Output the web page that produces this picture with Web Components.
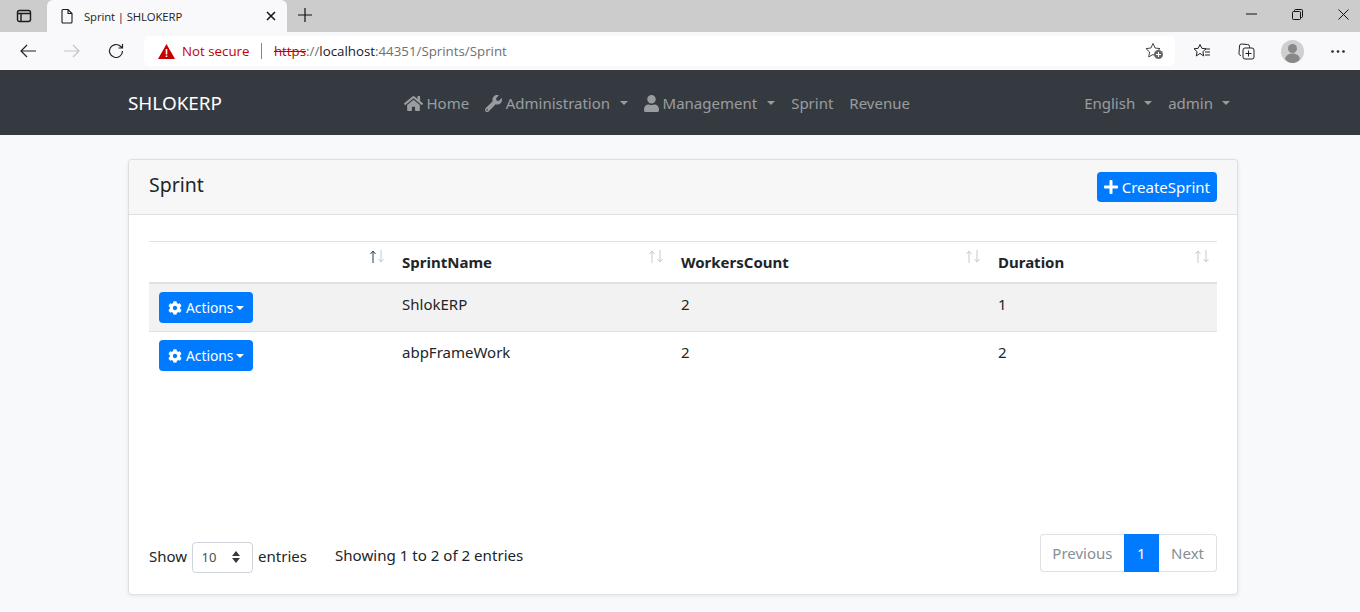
<!DOCTYPE html>
<html>
<head>
<meta charset="utf-8">
<title>Sprint | SHLOKERP</title>
<style>
  html, body { margin: 0; height: 100%; overflow: hidden; }
  body { background: #f8f9fa; font-family: "Noto Sans", "Open Sans", sans-serif; color: #212529; font-size: 15px; }
</style>
</head>
<body>
<browser-chrome></browser-chrome>
<app-navbar></app-navbar>
<main-page>
  <sprint-card>
    <sprint-table></sprint-table>
    <table-footer slot="footer"></table-footer>
  </sprint-card>
</main-page>

<script>
const ICONS = {
  home: `<svg viewBox="0 0 576 512" width="19" height="17"><path fill="currentColor" d="M280.4 148.3L96 300.1V464a16 16 0 0 0 16 16l112.1-.3a16 16 0 0 0 15.9-16V368a16 16 0 0 1 16-16h64a16 16 0 0 1 16 16v95.6a16 16 0 0 0 16 16.1L464 480a16 16 0 0 0 16-16V300L295.700 148.300a12.200 12.200 0 0 0-15.300 0zM571.600 251.500L488 182.600V44.100a12 12 0 0 0-12-12h-56a12 12 0 0 0-12 12v72.600L318.500 43a48 48 0 0 0-61 0L4.300 251.500a12 12 0 0 0-1.600 16.900l25.500 31A12 12 0 0 0 45.200 301l235.200-193.700a12.200 12.200 0 0 1 15.300 0L530.900 301a12 12 0 0 0 16.900-1.600l25.500-31a12 12 0 0 0-1.700-16.900z"/></svg>`,
  wrench: `<svg viewBox="0 0 512 512" width="17" height="17"><path fill="currentColor" d="M507.700 109.100c-2.200-9-13.500-12.100-20.100-5.500l-74.400 74.400-67.900-11.300-11.300-67.900 74.400-74.400c6.600-6.600 3.400-17.900-5.700-20.200-47.400-11.700-99.600.9-136.600 37.900-39.600 39.600-50.500 97.100-34.100 147.200L18.700 402.800c-25 25-25 65.500 0 90.500 25 25 65.500 25 90.500 0l213.200-213.200c50.100 16.700 107.500 5.700 147.400-34.200 37.100-37.100 49.700-89.300 37.900-136.800zM64 472c-13.200 0-24-10.800-24-24 0-13.300 10.700-24 24-24s24 10.700 24 24c0 13.200-10.700 24-24 24z"/></svg>`,
  user: `<svg viewBox="0 0 448 512" width="15" height="17"><path fill="currentColor" d="M224 256c70.700 0 128-57.300 128-128S294.700 0 224 0 96 57.300 96 128s57.300 128 128 128zm89.600 32h-16.700c-22.200 10.200-46.900 16-72.900 16s-50.600-5.800-72.900-16h-16.700C60.200 288 0 348.200 0 422.400V464c0 26.500 21.500 48 48 48h352c26.500 0 48-21.500 48-48v-41.600c0-74.200-60.200-134.400-134.400-134.400z"/></svg>`,
  cog: `<svg viewBox="0 0 512 512" width="14" height="14"><path fill="currentColor" d="M487.400 315.700l-42.600-24.600c4.300-23.200 4.300-47 0-70.200l42.600-24.600c4.900-2.800 7.100-8.600 5.500-14-11.100-35.600-30-67.800-54.700-94.600-3.800-4.100-10-5.100-14.800-2.300L380.800 110c-17.900-15.400-38.500-27.300-60.800-35.100V25.800c0-5.600-3.900-10.500-9.400-11.700-36.700-8.200-74.300-7.800-109.200 0-5.500 1.200-9.400 6.100-9.400 11.700V75c-22.200 7.900-42.800 19.800-60.800 35.100L88.700 85.500c-4.900-2.800-11-1.900-14.800 2.300-24.700 26.700-43.600 58.900-54.700 94.600-1.700 5.400.6 11.200 5.500 14L67.300 221c-4.300 23.200-4.300 47 0 70.200l-42.600 24.600c-4.900 2.800-7.100 8.600-5.500 14 11.100 35.600 30 67.800 54.700 94.600 3.800 4.100 10 5.100 14.800 2.300l42.600-24.600c17.900 15.400 38.500 27.300 60.800 35.100v49.200c0 5.600 3.900 10.500 9.400 11.700 36.700 8.200 74.300 7.800 109.200 0 5.500-1.200 9.400-6.100 9.400-11.700v-49.200c22.200-7.900 42.800-19.800 60.800-35.100l42.600 24.600c4.900 2.800 11 1.900 14.800-2.300 24.700-26.700 43.600-58.900 54.700-94.600 1.500-5.500-.7-11.300-5.600-14.100zM256 336c-44.100 0-80-35.900-80-80s35.900-80 80-80 80 35.900 80 80-35.900 80-80 80z"/></svg>`,
  plus: `<svg viewBox="0 0 448 512" width="14" height="16"><path fill="currentColor" d="M416 208H272V64c0-17.670-14.330-32-32-32h-32c-17.670 0-32 14.330-32 32v144H32c-17.670 0-32 14.330-32 32v32c0 17.670 14.330 32 32 32h144v144c0 17.670 14.330 32 32 32h32c17.670 0 32-14.330 32-32V304h144c17.670 0 32-14.330 32-32v-32c0-17.670-14.330-32-32-32z"/></svg>`
};

function define(name, html) {
  customElements.define(name, class extends HTMLElement {
    constructor() {
      super();
      this.attachShadow({mode: 'open'}).innerHTML = html;
    }
  });
}

define('browser-chrome', `
  <style>
    :host { display: block; font-family: "Open Sans", "Noto Sans", sans-serif; }
    svg { display: block; }
    .strip { height: 32px; background: #cccccc; display: flex; align-items: flex-end; }
    .panes { width: 47px; height: 32px; display: flex; align-items: center; justify-content: center; }
    .tab { width: 240px; height: 32px; background: #f9f9fb; border-radius: 6px 6px 0 0; display: flex; align-items: center; box-sizing: border-box; padding: 0 11px 0 13px; font-size: 11.300px; color: #222; }
    .tab .title { flex: 1; margin-left: 10px; letter-spacing: -.1px; }
    .newtab { width: 36px; height: 30px; padding-bottom: 2px; display: flex; align-items: center; justify-content: center; }
    .spacer { flex: 1; }
    .win { width: 46px; height: 28px; padding-bottom: 4px; display: flex; align-items: center; justify-content: center; }
    .win:last-child { width: 34px; padding-left: 6px; }
    .bar { height: 38px; background: #f9f9fb; display: flex; align-items: center; border-bottom: 1px solid #3a3a3a; }
    .nav { width: 44px; display: flex; justify-content: center; }
    .nav.first { margin-left: 6px; }
    .url { width: 1031px; height: 30px; margin-left: 6px; background: #fff; border-radius: 5px; display: flex; align-items: center; box-sizing: border-box; padding-left: 14px; font-size: 13.300px; white-space: nowrap; }
    .warn { color: #c40000; margin-left: 7px; }
    .sep { width: 1px; height: 16px; background: #888; margin: 0 11.500px 0 12px; }
    .https { color: #c40000; text-decoration: line-through; }
    .dim { color: #6f6f6f; }
    .host { color: #1a1a1a; }
    .fav { margin-left: auto; margin-right: 11px; }
    .tools { display: flex; align-items: center; flex: 1; margin-left: 5px; }
    .tools > div { width: 44px; display: flex; justify-content: center; align-items: center; }
    .tools > div.avatar { width: 48px; }
  </style>
  <div class="strip">
    <div class="panes">
      <svg width="16" height="16" viewBox="0 0 16 16" fill="none" stroke="#1a1a1a" stroke-width="1.400"><rect x="1.500" y="2.500" width="13" height="11" rx="2"/><path d="M1.500 5.500h13M5 5.500v8" /></svg>
    </div>
    <div class="tab">
      <svg width="14" height="16" viewBox="0 0 14 16" fill="none" stroke="#1a1a1a" stroke-width="1.100"><path d="M2 2.500a1 1 0 0 1 1-1h5l4 4v8.500a1 1 0 0 1-1 1H3a1 1 0 0 1-1-1zM8 1.500v4h4"/></svg>
      <span class="title">Sprint | SHLOKERP</span>
      <svg width="10" height="10" viewBox="0 0 10 10" stroke="#111" stroke-width="1.500"><path d="M1 1l8 8M9 1l-8 8"/></svg>
    </div>
    <div class="newtab">
      <svg width="16" height="16" viewBox="0 0 16 16" stroke="#111" stroke-width="1.200"><path d="M8 1v14M1 8h14"/></svg>
    </div>
    <div class="spacer"></div>
    <div class="win"><svg width="11" height="2" viewBox="0 0 11 2" stroke="#111"><path d="M0 1h11"/></svg></div>
    <div class="win"><svg width="11" height="11" viewBox="0 0 11 11" fill="none" stroke="#111"><rect x=".500" y="2.500" width="8" height="8" rx="1"/><path d="M2.500 2.500v-1a1 1 0 0 1 1-1h6a1 1 0 0 1 1 1v6a1 1 0 0 1-1 1h-1"/></svg></div>
    <div class="win"><svg width="11" height="11" viewBox="0 0 11 11" stroke="#111"><path d="M.500.500l10 10M10.500.500l-10 10"/></svg></div>
  </div>
  <div class="bar">
    <div class="nav first"><svg width="16" height="14" viewBox="0 0 16 14" fill="none" stroke="#222" stroke-width="1.200"><path d="M16 7H1M7 1L1 7l6 6"/></svg></div>
    <div class="nav"><svg width="16" height="14" viewBox="0 0 16 14" fill="none" stroke="#c4c4c4" stroke-width="1.200"><path d="M0 7h15M9 1l6 6-6 6"/></svg></div>
    <div class="nav"><svg width="16" height="16" viewBox="0 0 16 16" fill="none" stroke="#222" stroke-width="1.200"><path d="M14.500 8a6.500 6.500 0 1 1-2-4.700L14.500 5M14.500 1v4h-4"/></svg></div>
    <div class="url">
      <svg width="17" height="15" viewBox="0 0 17 15"><path fill="#c40000" d="M8.500 0L17 15H0z"/><path fill="#fff" d="M7.700 5h1.600v5.500H7.700zM7.700 11.500h1.600v1.600H7.700z"/></svg>
      <span class="warn">Not secure</span>
      <span class="sep"></span>
      <span><span class="https">https</span><span class="dim">://</span><span class="host">localhost</span><span class="dim">:44351/Sprints/Sprint</span></span>
      <svg class="fav" width="19" height="18" viewBox="0 0 19 18"><path fill="none" stroke="#444" d="M8 1.500l2.100 4.500 4.900.6-3.600 3.400.9 4.900L8 12.500l-4.300 2.400.9-4.900L1 6.600l4.900-.6z"/><circle cx="13.500" cy="12.500" r="4.500" fill="#666"/><path stroke="#fff" d="M13.500 10v5M11 12.500h5"/></svg>
    </div>
    <div class="tools">
      <div><svg width="18" height="16" viewBox="0 0 18 16" fill="none" stroke="#222"><path d="M7 1.500l1.800 3.800 4.200.5-3.100 2.900.8 4.300L7 10.400l-3.700 2.600.8-4.300L1 5.800l4.200-.5zM12 6h5M12 9h5M12 12h5"/></svg></div>
      <div><svg width="17" height="17" viewBox="0 0 17 17" fill="none" stroke="#222"><rect x="5" y="5" width="11" height="11" rx="2"/><path d="M10.500 7.500v6M7.500 10.500h6M3 12.500a2 2 0 0 1-2-2.500L1.500 3a2 2 0 0 1 2-2l6 .5a2 2 0 0 1 2 2V5"/></svg></div>
      <div class="avatar"><svg width="23" height="23" viewBox="0 0 23 23"><circle cx="11.500" cy="11.500" r="11.500" fill="#cfcfcf"/><circle cx="11.500" cy="8.500" r="4.500" fill="#888"/><path fill="#888" d="M4 19c1-4 4-5.500 7.500-5.500S18 15 19 19c-2 2.500-4.500 4-7.500 4S6 21.500 4 19z"/></svg></div>
      <div><svg width="14" height="3" viewBox="0 0 14 3" fill="#222"><circle cx="1.500" cy="1.500" r="1.300"/><circle cx="7" cy="1.500" r="1.300"/><circle cx="12.500" cy="1.500" r="1.300"/></svg></div>
    </div>
  </div>
`);

define('nav-item', `
  <style>
    :host { display: flex; align-items: center; color: rgba(255,255,255,.5); padding: 0 8px; font-size: 15px; gap: 3.500px; white-space: nowrap; height: 40px; }
    ::slotted(svg) { display: block; }
    :host([caret])::after { content: ""; margin-left: var(--caret-gap, 6.500px); border-top: 4.800px solid; border-left: 4.800px solid transparent; border-right: 4.800px solid transparent; }
  </style>
  <slot></slot>
`);

define('app-navbar', `
  <style>
    :host { display: flex; align-items: center; height: 64px; background: #343a40; box-sizing: border-box; padding: 0 122px 0 128px; }
    .brand { color: #fff; font-size: 18.900px; width: 268px; }
    .center { display: flex; align-items: center; flex: 1; }
    .right { display: flex; align-items: center; --caret-gap: 5.500px; }
  </style>
  <div class="brand">SHLOKERP</div>
  <div class="center">
    <nav-item>${ICONS.home}Home</nav-item>
    <nav-item caret>${ICONS.wrench}Administration</nav-item>
    <nav-item caret>${ICONS.user}Management</nav-item>
    <nav-item>Sprint</nav-item>
    <nav-item>Revenue</nav-item>
  </div>
  <div class="right">
    <nav-item caret>English</nav-item>
    <nav-item caret>admin</nav-item>
  </div>
`);

define('main-page', `
  <style>:host { display: block; padding: 24px 122px 0 128px; }</style>
  <slot></slot>
`);

define('blue-button', `
  <style>
    :host { display: inline-flex; align-items: center; gap: 4px; background: #007bff; color: #fff; border-radius: 4px; white-space: nowrap; box-sizing: border-box; font-size: 13.800px; padding: 0 8px 0 9px; height: 31px; }
    ::slotted(svg) { display: block; }
  </style>
  <slot></slot>
`);

define('sprint-card', `
  <style>
    :host { display: block; height: 436px; box-sizing: border-box; background: #fff; border: 1px solid #dfdfdf; border-radius: 4px; box-shadow: 0 1px 4px rgba(0,0,0,.08); }
    .head { height: 55px; box-sizing: border-box; background: #f7f7f7; border-bottom: 1px solid #dfdfdf; border-radius: 4px 4px 0 0; display: flex; align-items: center; justify-content: space-between; padding: 0 20px; }
    h2 { margin: 0; font-weight: 400; font-size: 19.500px; color: #212529; position: relative; top: -3px; }
    .body { padding: 26px 20px 0; display: flex; flex-direction: column; height: 380px; box-sizing: border-box; }
    .fill { flex: 1; }
  </style>
  <div class="head">
    <h2>Sprint</h2>
    <blue-button style="font-size:15px;height:30px;padding:0 7px">${ICONS.plus}CreateSprint</blue-button>
  </div>
  <div class="body">
    <div class="fill"><slot></slot></div>
    <slot name="footer"></slot>
  </div>
`);

define('sort-arrows', `
  <style>
    :host { position: absolute; right: 8px; top: 8px; display: flex; gap: 2px; color: #c3cbd6; }
    :host([active]) .up { color: #1d3f66; }
    svg { display: block; }
  </style>
  <svg class="up" width="6" height="13" viewBox="0 0 6 13" fill="none" stroke="currentColor"><path d="M3 13V1M.5 4L3 1l2.500 3"/></svg>
  <svg width="6" height="13" viewBox="0 0 6 13" fill="none" stroke="currentColor"><path d="M3 0v12M.5 9L3 12l2.500-3"/></svg>
`);

define('sprint-table', `
  <style>
    :host { display: block; }
    .row { display: grid; grid-template-columns: 243px 279px 317px 1fr; }
    .head { height: 43px; border-top: 1px solid #dee2e6; border-bottom: 2px solid #dee2e6; box-sizing: border-box; font-weight: 700; }
    .head > div { position: relative; padding: 10px 10px 0; }
    .data { height: 48px; border-bottom: 1px solid #dee2e6; box-sizing: border-box; }
    .data > div { padding: 10px 10px 0; }
    .stripe { background: #f2f2f2; }
    .data blue-button { margin-top: -1px; }
    .data > div:first-child { padding-top: 9px; }
    .data:last-child { border-bottom: 0; }
    .caret { border-top: 4.800px solid; border-left: 4.800px solid transparent; border-right: 4.800px solid transparent; margin-left: -1px; }
  </style>
  <div class="row head">
    <div><sort-arrows active></sort-arrows></div>
    <div>SprintName<sort-arrows></sort-arrows></div>
    <div>WorkersCount<sort-arrows></sort-arrows></div>
    <div>Duration<sort-arrows></sort-arrows></div>
  </div>
  <div class="row data stripe">
    <div><blue-button style="padding-right:9px">${ICONS.cog}Actions<span class="caret"></span></blue-button></div>
    <div>ShlokERP</div><div>2</div><div>1</div>
  </div>
  <div class="row data">
    <div><blue-button style="padding-right:9px">${ICONS.cog}Actions<span class="caret"></span></blue-button></div>
    <div>abpFrameWork</div><div>2</div><div>2</div>
  </div>
`);

define('table-footer', `
  <style>
    :host { display: flex; align-items: center; height: 38px; margin-bottom: 23px; font-size: 15px; white-space: nowrap; }
    .left { display: flex; align-items: center; padding-top: 6px; }
    .select { display: inline-flex; align-items: center; justify-content: space-between; width: 61px; height: 31px; box-sizing: border-box; border: 1px solid #ced4da; border-radius: 4px; margin: 2px 5px 0 5px; padding: 0 12px 0 8.500px; font-size: 13px; color: #495057; }
    .select i { display: flex; flex-direction: column; gap: 2px; }
    .select i::before { content: ""; border-bottom: 5px solid #343a40; border-left: 4px solid transparent; border-right: 4px solid transparent; }
    .select i::after { content: ""; border-top: 5px solid #343a40; border-left: 4px solid transparent; border-right: 4px solid transparent; }
    .info { margin-left: 28px; position: relative; top: -1px; font-size: 15.100px; }
    .pager { margin-left: auto; display: flex; height: 38px; color: #868e96; }
    .pager span { display: flex; align-items: center; border: 1px solid #dee2e6; padding: 0 12px 0 11.500px; background: #fff; }
    .pager span:first-child { border-radius: 4px 0 0 4px; border-right: 0; }
    .pager span:last-child { border-radius: 0 4px 4px 0; border-left: 0; padding-left: 12.500px; }
    .pager .on { background: #007bff; color: #fff; border-color: #007bff; }
  </style>
  <div class="left">
    <span>Show</span>
    <span class="select">10<i></i></span>
    <span>entries</span>
    <span class="info">Showing 1 to 2 of 2 entries</span>
  </div>
  <div class="pager"><span>Previous</span><span class="on">1</span><span>Next</span></div>
`);
</script>
</body>
</html>
